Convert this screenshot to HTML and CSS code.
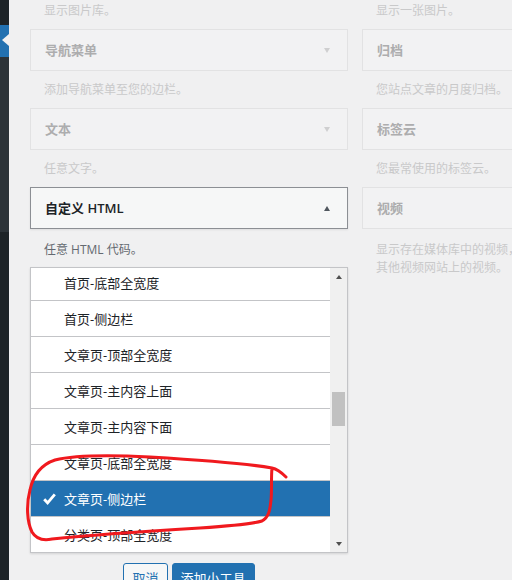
FILE: index.html
```html
<!DOCTYPE html>
<html lang="zh-CN">
<head>
<meta charset="utf-8">
<title>小工具</title>
<link rel="stylesheet" href="styles.css">
</head>
<body>
<div class="app">
  <aside class="adminmenu">
    <div class="m-top"></div>
    <div class="m-current"><span class="m-arrow"></span></div>
    <div class="m-sub"></div>
    <div class="m-rest"></div>
  </aside>
  <main class="content">
    <div class="cols">
      <div class="col">
        <p class="desc first faded">显示图片库。</p>
        <div class="widget faded"><span class="wtitle">导航菜单</span><span class="caret down"></span></div>
        <p class="desc faded">添加导航菜单至您的边栏。</p>
        <div class="widget faded"><span class="wtitle">文本</span><span class="caret down"></span></div>
        <p class="desc faded">任意文字。</p>
        <div class="widget active"><span class="wtitle">自定义 HTML</span><span class="caret up"></span></div>
        <p class="desc tall">任意 HTML 代码。</p>
        <div class="chooser">
          <div class="sb-list">
            <ul class="sidebars">
              <li class="sb">首页-底部全宽度</li>
              <li class="sb">首页-侧边栏</li>
              <li class="sb">文章页-顶部全宽度</li>
              <li class="sb">文章页-主内容上面</li>
              <li class="sb">文章页-主内容下面</li>
              <li class="sb">文章页-底部全宽度</li>
              <li class="sb selected"><svg class="check" width="13" height="12" viewBox="0 0 13 12"><path d="M1.2 6.2 L4.6 9.8 L11.8 1.4" fill="none" stroke="#fff" stroke-width="2.8"/></svg>文章页-侧边栏</li>
              <li class="sb">分类页-顶部全宽度</li>
            </ul>
            <div class="scrollbar">
              <div class="sbtn"><span class="tri tri-up"></span></div>
              <div class="track"><div class="thumb"></div></div>
              <div class="sbtn"><span class="tri tri-down"></span></div>
            </div>
          </div>
          <div class="actions">
            <button class="btn">取消</button>
            <button class="btn primary">添加小工具</button>
          </div>
        </div>
      </div>
      <div class="col">
        <p class="desc first faded">显示一张图片。</p>
        <div class="widget faded"><span class="wtitle">归档</span></div>
        <p class="desc faded">您站点文章的月度归档。</p>
        <div class="widget faded"><span class="wtitle">标签云</span></div>
        <p class="desc faded">您最常使用的标签云。</p>
        <div class="widget faded"><span class="wtitle">视频</span></div>
        <p class="desc tall faded">显示存在媒体库中的视频，或来自YouTube、Vimeo或<br>其他视频网站上的视频。</p>
      </div>
    </div>
  </main>
</div>
<svg class="annot" width="512" height="580" viewBox="0 0 512 580">
  <path d="M286 477 C281 472 277 469 272 468 C250 464 200 460 150 457 C110 455 75 455 55 460 C40 465 33 476 30 490 C26 505 27 522 32 532 C36 539 42 541 52 539 C90 535 150 531 200 528 C230 526 252 524 262 521 C269 517 270 510 271 500 C272 490 271 478 272 468" fill="none" stroke="#f0191e" stroke-width="3" stroke-linecap="round" stroke-linejoin="round"/>
</svg>
</body>
</html>
```
FILE: styles.css
```css
html, body {
  margin: 0;
  padding: 0;
}
body {
  width: 512px;
  height: 580px;
  overflow: hidden;
  background: #f0f0f1;
  font-family: "Open Sans", "Noto Sans CJK SC", sans-serif;
  font-size: 13px;
  color: #1d2327;
  position: relative;
}
.app {
  display: flex;
  height: 580px;
}
.adminmenu {
  width: 9px;
  flex: 0 0 9px;
  display: flex;
  flex-direction: column;
}
.m-top { height: 25px; background: #1d2327; }
.m-current {
  height: 32px;
  background: #2271b1;
  display: flex;
  align-items: center;
  justify-content: flex-end;
}
.m-arrow {
  width: 0;
  height: 0;
  border-top: 6px solid transparent;
  border-bottom: 6px solid transparent;
  border-right: 7px solid #f0f0f1;
  margin-top: -2px;
}
.m-sub { height: 175px; background: #2c3338; }
.m-rest { flex: 1; background: #1d2327; }

.content {
  flex: 1;
  overflow: hidden;
  padding-left: 21px;
}
.cols {
  display: flex;
  gap: 14px;
}
.col {
  width: 318px;
  flex: 0 0 318px;
}
.desc {
  margin: 0;
  padding: 10px 14px 9px;
  font-size: 12px;
  line-height: 18px;
  color: #646970;
  white-space: nowrap;
}
.desc.first { padding-top: 2px; }
.desc.tall { padding-top: 12px; padding-bottom: 8px; }
.desc.faded { color: #c9c9ca; }

.widget {
  box-sizing: border-box;
  height: 42px;
  border: 1px solid #e2e2e3;
  background: #f2f2f3;
  display: flex;
  align-items: center;
  justify-content: space-between;
  padding: 0 17px 0 14px;
}
.wtitle {
  font-size: 13px;
  font-weight: 600;
  line-height: 18px;
  white-space: nowrap;
}
.widget.faded .wtitle { color: #adadae; }
.widget.active {
  background: #f6f7f7;
  border-color: #8c8f94;
  box-shadow: 0 1px 2px rgba(0,0,0,.08);
}
.widget.active .wtitle { color: #1d2327; }
.caret {
  width: 0;
  height: 0;
  border-left: 3.5px solid transparent;
  border-right: 3.5px solid transparent;
}
.caret.down { border-top: 5px solid #cfcfd0; }
.caret.up { border-bottom: 5px solid #50575e; }

.sb-list {
  display: flex;
  height: 286px;
  box-sizing: border-box;
  border: 1px solid #c3c4c7;
  background: #fff;
  box-shadow: 0 1px 2px rgba(0,0,0,.12);
  overflow: hidden;
}
.sidebars {
  list-style: none;
  margin: -3px 0 0;
  padding: 0;
  flex: 1;
}
.sb {
  height: 35px;
  border-bottom: 1px solid #c3c4c7;
  display: flex;
  align-items: center;
  padding-left: 33px;
  position: relative;
  font-size: 13px;
  color: #1d2327;
  white-space: nowrap;
}
.sb.selected {
  background: #2271b1;
  color: #fff;
}
.check {
  position: absolute;
  left: 12px;
  top: 12px;
}
.scrollbar {
  width: 17px;
  flex: 0 0 17px;
  background: #f0f0f0;
  display: flex;
  flex-direction: column;
}
.sbtn {
  height: 17px;
  display: flex;
  align-items: center;
  justify-content: center;
}
.track { flex: 1; }
.thumb {
  margin: 107px 0 0 2px;
  width: 13px;
  height: 34px;
  background: #c1c1c1;
}
.tri {
  width: 0;
  height: 0;
  border-left: 3.5px solid transparent;
  border-right: 3.5px solid transparent;
}
.tri-up { border-bottom: 4px solid #505050; }
.tri-down { border-top: 4px solid #505050; }

.actions {
  display: flex;
  justify-content: center;
  gap: 4px;
  margin-top: 10px;
}
.btn {
  font-family: "Open Sans", "Noto Sans CJK SC", sans-serif;
  font-size: 13px;
  height: 30px;
  line-height: 28px;
  padding: 0 8px;
  border: 1px solid #2271b1;
  border-radius: 3px;
  background: #f6f7f7;
  color: #2271b1;
}
.btn.primary {
  background: #2271b1;
  color: #fff;
}
.annot {
  position: absolute;
  left: 0;
  top: 0;
  pointer-events: none;
}
```
